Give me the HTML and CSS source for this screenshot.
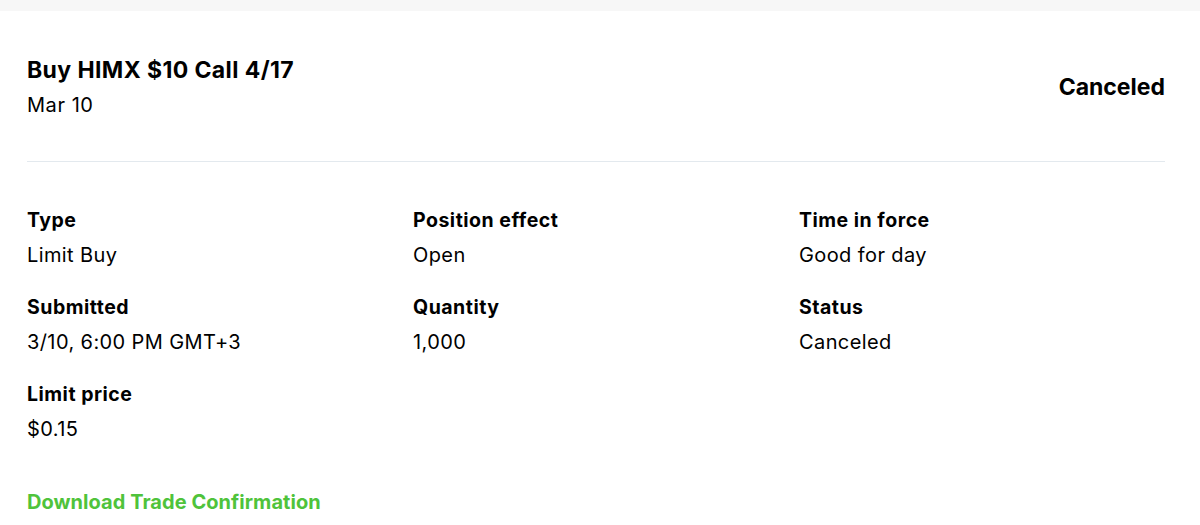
FILE: index.html
```html
<!DOCTYPE html>
<html>
<head>
<meta charset="utf-8">
<link rel="stylesheet" href="styles.css">
</head>
<body>
<div class="topbar"></div>
<main class="panel">
  <header class="head">
    <div class="head-left">
      <h1 class="title">Buy HIMX $10 Call 4/17</h1>
      <div class="date">Mar 10</div>
    </div>
    <div class="state">Canceled</div>
  </header>
  <hr class="divider">
  <section class="grid">
    <div class="cell"><div class="label">Type</div><div class="value">Limit Buy</div></div>
    <div class="cell"><div class="label">Position effect</div><div class="value">Open</div></div>
    <div class="cell"><div class="label">Time in force</div><div class="value">Good for day</div></div>
    <div class="cell"><div class="label">Submitted</div><div class="value">3/10, 6:00 PM GMT+3</div></div>
    <div class="cell"><div class="label">Quantity</div><div class="value">1,000</div></div>
    <div class="cell"><div class="label">Status</div><div class="value">Canceled</div></div>
    <div class="cell"><div class="label">Limit price</div><div class="value">$0.15</div></div>
  </section>
  <a class="download" href="#">Download Trade Confirmation</a>
</main>
</body>
</html>
```
FILE: styles.css
```css
html, body {
  margin: 0;
  padding: 0;
  background: #ffffff;
  font-family: Inter, "Liberation Sans", sans-serif;
  color: #000;
}
.topbar {
  height: 11px;
  background: #f7f7f7;
}
.panel {
  padding: 0 35px 0 27px;
}
.head {
  display: flex;
  justify-content: space-between;
  align-items: center;
  padding-top: 45px;
}
.title {
  margin: 0;
  font-size: 23px;
  font-weight: 700;
  line-height: 28px;
  letter-spacing: 0.4px;
}
.date {
  font-size: 20px;
  line-height: 24px;
  margin-top: 9px;
  letter-spacing: 0.55px;
}
.state {
  font-size: 23px;
  font-weight: 700;
  line-height: 28px;
  letter-spacing: 0px;
}
.divider {
  border: 0;
  height: 1px;
  background: #e3e9ee;
  margin: 44px 0 0 0;
}
.grid {
  display: grid;
  grid-template-columns: 386px 386px 1fr;
  row-gap: 28.5px;
  margin-top: 46px;
}
.label {
  font-size: 19.5px;
  font-weight: 700;
  line-height: 24px;
  letter-spacing: 0.5px;
}
.value {
  font-size: 20px;
  line-height: 24px;
  margin-top: 10.5px;
  letter-spacing: 0.4px;
}
.download {
  display: inline-block;
  margin-top: 49px;
  font-size: 20px;
  font-weight: 700;
  line-height: 24px;
  color: #4fc33b;
  text-decoration: none;
  letter-spacing: 0.05px;
}
```
